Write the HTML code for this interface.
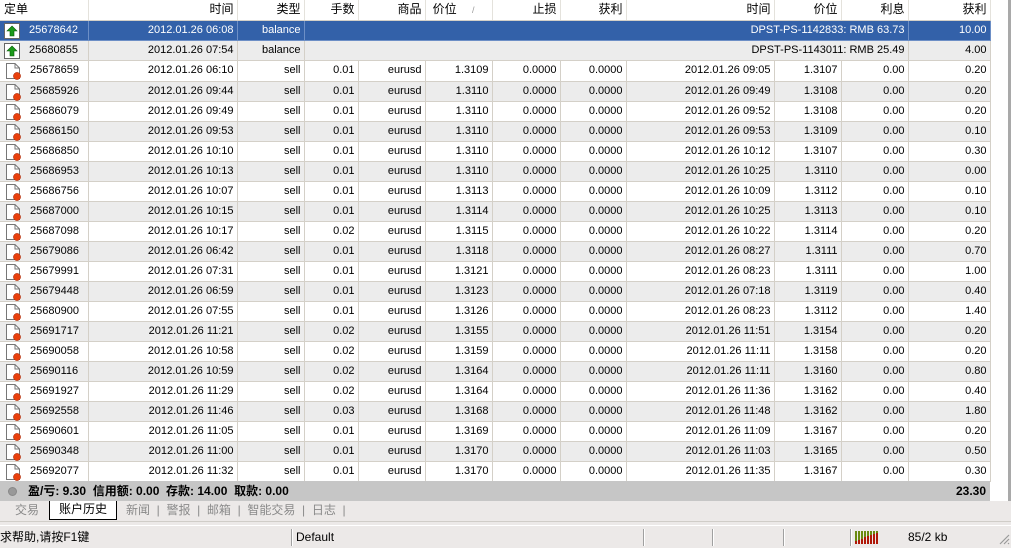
<!DOCTYPE html>
<html><head><meta charset="utf-8"><style>
*{margin:0;padding:0;box-sizing:border-box}
body{width:1011px;height:546px;overflow:hidden;background:#ece9e8;font-family:"Liberation Sans","Noto Sans CJK SC",sans-serif;font-size:11px;color:#000;position:relative}
#grid{position:absolute;left:0;top:0;width:1011px;height:501px;background:#fff;border-right:3px solid #a9a9a9;overflow:hidden}
table{position:absolute;left:0;top:0;width:990px;table-layout:fixed;border-collapse:collapse}
tr{height:20px}
td,th{height:20px;line-height:19px;border-right:1px solid #d4d0c8;border-bottom:1px solid #d4d0c8;text-align:right;padding:0 3px 0 0;white-space:nowrap;overflow:hidden;font-weight:normal;font-size:11px;vertical-align:top}
th{background:#fff;border-right:1px solid #e4e2dc;font-size:12px}
tr.g td{background:#ececec}
tr.sel td{background:#3361a9;color:#fff;border-color:#6d8fc6}
td.f,th.f{text-align:left;padding-left:0}
td.f span{display:inline-block;vertical-align:top;height:19px;line-height:19px}
.ic{display:block;width:18px;height:18px;margin:1px 8px 0 4px}
#sum{position:absolute;left:0;top:481px;width:990px;height:20px;background:#c6c6c6;font-weight:bold;font-size:12px;line-height:20px}
#tabs{position:absolute;left:0;top:501px;width:1011px;height:21px;background:#ece9e8;color:#8a8a8a;font-size:12px;line-height:19px;border-bottom:1px solid #d0cdc8}
#tabs span{position:absolute;top:0}
#status{position:absolute;left:0;top:525px;width:1011px;height:21px;border-top:1px solid #fff;font-size:12px;line-height:22px}
.sep{position:absolute;top:3px;width:2px;height:17px;border-left:1px solid #a0a0a0;border-right:1px solid #fff}
</style></head><body>
<div id="grid">
<table>
<colgroup><col style="width:88px"><col style="width:149px"><col style="width:67px"><col style="width:54px"><col style="width:67px"><col style="width:67px"><col style="width:68px"><col style="width:66px"><col style="width:148px"><col style="width:67px"><col style="width:67px"><col style="width:82px"></colgroup>
<tr><th class="f" style="padding-left:4px">定单</th><th>时间</th><th>类型</th><th>手数</th><th>商品</th><th>价位 <span style="color:#999;font-size:9px;padding:0 14px 0 12px">/</span></th><th>止损</th><th>获利</th><th>时间</th><th>价位</th><th>利息</th><th>获利</th></tr>
<tr class="sel"><td class="f"><span><svg class="ic" viewBox="0 0 18 18" style="margin-left:3px"><rect x="1.5" y="1.5" width="15" height="15" fill="#fff" stroke="#666"/><path d="M9 4 L14 9 H11 V14 H7 V9 H4 Z" fill="#1a9a1a" stroke="#0a5a0a" stroke-width=".6"/></svg></span><span>25678642</span></td><td>2012.01.26 06:08</td><td>balance</td><td colspan="8">DPST-PS-1142833: RMB 63.73</td><td>10.00</td></tr>
<tr class="g"><td class="f"><span><svg class="ic" viewBox="0 0 18 18" style="margin-left:3px"><rect x="1.5" y="1.5" width="15" height="15" fill="#fff" stroke="#666"/><path d="M9 4 L14 9 H11 V14 H7 V9 H4 Z" fill="#1a9a1a" stroke="#0a5a0a" stroke-width=".6"/></svg></span><span>25680855</span></td><td>2012.01.26 07:54</td><td>balance</td><td colspan="8">DPST-PS-1143011: RMB 25.49</td><td>4.00</td></tr>
</table>
<table id="t2" style="top:61px">
<colgroup><col style="width:88px"><col style="width:149px"><col style="width:67px"><col style="width:54px"><col style="width:67px"><col style="width:67px"><col style="width:68px"><col style="width:66px"><col style="width:148px"><col style="width:67px"><col style="width:67px"><col style="width:82px"></colgroup>
<tbody id="rows">
<tr><td class="f"><span><svg class="ic" viewBox="0 0 18 18"><path d="M2.5 1.5H11L15.5 6V16.5H2.5Z" fill="#fff" stroke="#777"/><path d="M11 1.5V6H15.5" fill="none" stroke="#777"/><circle cx="13" cy="14" r="3.6" fill="#e8400c" stroke="#a02000" stroke-width=".5"/></svg></span><span>25678659</span></td><td>2012.01.26 06:10</td><td>sell</td><td>0.01</td><td>eurusd</td><td>1.3109</td><td>0.0000</td><td>0.0000</td><td>2012.01.26 09:05</td><td>1.3107</td><td>0.00</td><td>0.20</td></tr>
<tr class="g"><td class="f"><span><svg class="ic" viewBox="0 0 18 18"><path d="M2.5 1.5H11L15.5 6V16.5H2.5Z" fill="#fff" stroke="#777"/><path d="M11 1.5V6H15.5" fill="none" stroke="#777"/><circle cx="13" cy="14" r="3.6" fill="#e8400c" stroke="#a02000" stroke-width=".5"/></svg></span><span>25685926</span></td><td>2012.01.26 09:44</td><td>sell</td><td>0.01</td><td>eurusd</td><td>1.3110</td><td>0.0000</td><td>0.0000</td><td>2012.01.26 09:49</td><td>1.3108</td><td>0.00</td><td>0.20</td></tr>
<tr><td class="f"><span><svg class="ic" viewBox="0 0 18 18"><path d="M2.5 1.5H11L15.5 6V16.5H2.5Z" fill="#fff" stroke="#777"/><path d="M11 1.5V6H15.5" fill="none" stroke="#777"/><circle cx="13" cy="14" r="3.6" fill="#e8400c" stroke="#a02000" stroke-width=".5"/></svg></span><span>25686079</span></td><td>2012.01.26 09:49</td><td>sell</td><td>0.01</td><td>eurusd</td><td>1.3110</td><td>0.0000</td><td>0.0000</td><td>2012.01.26 09:52</td><td>1.3108</td><td>0.00</td><td>0.20</td></tr>
<tr class="g"><td class="f"><span><svg class="ic" viewBox="0 0 18 18"><path d="M2.5 1.5H11L15.5 6V16.5H2.5Z" fill="#fff" stroke="#777"/><path d="M11 1.5V6H15.5" fill="none" stroke="#777"/><circle cx="13" cy="14" r="3.6" fill="#e8400c" stroke="#a02000" stroke-width=".5"/></svg></span><span>25686150</span></td><td>2012.01.26 09:53</td><td>sell</td><td>0.01</td><td>eurusd</td><td>1.3110</td><td>0.0000</td><td>0.0000</td><td>2012.01.26 09:53</td><td>1.3109</td><td>0.00</td><td>0.10</td></tr>
<tr><td class="f"><span><svg class="ic" viewBox="0 0 18 18"><path d="M2.5 1.5H11L15.5 6V16.5H2.5Z" fill="#fff" stroke="#777"/><path d="M11 1.5V6H15.5" fill="none" stroke="#777"/><circle cx="13" cy="14" r="3.6" fill="#e8400c" stroke="#a02000" stroke-width=".5"/></svg></span><span>25686850</span></td><td>2012.01.26 10:10</td><td>sell</td><td>0.01</td><td>eurusd</td><td>1.3110</td><td>0.0000</td><td>0.0000</td><td>2012.01.26 10:12</td><td>1.3107</td><td>0.00</td><td>0.30</td></tr>
<tr class="g"><td class="f"><span><svg class="ic" viewBox="0 0 18 18"><path d="M2.5 1.5H11L15.5 6V16.5H2.5Z" fill="#fff" stroke="#777"/><path d="M11 1.5V6H15.5" fill="none" stroke="#777"/><circle cx="13" cy="14" r="3.6" fill="#e8400c" stroke="#a02000" stroke-width=".5"/></svg></span><span>25686953</span></td><td>2012.01.26 10:13</td><td>sell</td><td>0.01</td><td>eurusd</td><td>1.3110</td><td>0.0000</td><td>0.0000</td><td>2012.01.26 10:25</td><td>1.3110</td><td>0.00</td><td>0.00</td></tr>
<tr><td class="f"><span><svg class="ic" viewBox="0 0 18 18"><path d="M2.5 1.5H11L15.5 6V16.5H2.5Z" fill="#fff" stroke="#777"/><path d="M11 1.5V6H15.5" fill="none" stroke="#777"/><circle cx="13" cy="14" r="3.6" fill="#e8400c" stroke="#a02000" stroke-width=".5"/></svg></span><span>25686756</span></td><td>2012.01.26 10:07</td><td>sell</td><td>0.01</td><td>eurusd</td><td>1.3113</td><td>0.0000</td><td>0.0000</td><td>2012.01.26 10:09</td><td>1.3112</td><td>0.00</td><td>0.10</td></tr>
<tr class="g"><td class="f"><span><svg class="ic" viewBox="0 0 18 18"><path d="M2.5 1.5H11L15.5 6V16.5H2.5Z" fill="#fff" stroke="#777"/><path d="M11 1.5V6H15.5" fill="none" stroke="#777"/><circle cx="13" cy="14" r="3.6" fill="#e8400c" stroke="#a02000" stroke-width=".5"/></svg></span><span>25687000</span></td><td>2012.01.26 10:15</td><td>sell</td><td>0.01</td><td>eurusd</td><td>1.3114</td><td>0.0000</td><td>0.0000</td><td>2012.01.26 10:25</td><td>1.3113</td><td>0.00</td><td>0.10</td></tr>
<tr><td class="f"><span><svg class="ic" viewBox="0 0 18 18"><path d="M2.5 1.5H11L15.5 6V16.5H2.5Z" fill="#fff" stroke="#777"/><path d="M11 1.5V6H15.5" fill="none" stroke="#777"/><circle cx="13" cy="14" r="3.6" fill="#e8400c" stroke="#a02000" stroke-width=".5"/></svg></span><span>25687098</span></td><td>2012.01.26 10:17</td><td>sell</td><td>0.02</td><td>eurusd</td><td>1.3115</td><td>0.0000</td><td>0.0000</td><td>2012.01.26 10:22</td><td>1.3114</td><td>0.00</td><td>0.20</td></tr>
<tr class="g"><td class="f"><span><svg class="ic" viewBox="0 0 18 18"><path d="M2.5 1.5H11L15.5 6V16.5H2.5Z" fill="#fff" stroke="#777"/><path d="M11 1.5V6H15.5" fill="none" stroke="#777"/><circle cx="13" cy="14" r="3.6" fill="#e8400c" stroke="#a02000" stroke-width=".5"/></svg></span><span>25679086</span></td><td>2012.01.26 06:42</td><td>sell</td><td>0.01</td><td>eurusd</td><td>1.3118</td><td>0.0000</td><td>0.0000</td><td>2012.01.26 08:27</td><td>1.3111</td><td>0.00</td><td>0.70</td></tr>
<tr><td class="f"><span><svg class="ic" viewBox="0 0 18 18"><path d="M2.5 1.5H11L15.5 6V16.5H2.5Z" fill="#fff" stroke="#777"/><path d="M11 1.5V6H15.5" fill="none" stroke="#777"/><circle cx="13" cy="14" r="3.6" fill="#e8400c" stroke="#a02000" stroke-width=".5"/></svg></span><span>25679991</span></td><td>2012.01.26 07:31</td><td>sell</td><td>0.01</td><td>eurusd</td><td>1.3121</td><td>0.0000</td><td>0.0000</td><td>2012.01.26 08:23</td><td>1.3111</td><td>0.00</td><td>1.00</td></tr>
<tr class="g"><td class="f"><span><svg class="ic" viewBox="0 0 18 18"><path d="M2.5 1.5H11L15.5 6V16.5H2.5Z" fill="#fff" stroke="#777"/><path d="M11 1.5V6H15.5" fill="none" stroke="#777"/><circle cx="13" cy="14" r="3.6" fill="#e8400c" stroke="#a02000" stroke-width=".5"/></svg></span><span>25679448</span></td><td>2012.01.26 06:59</td><td>sell</td><td>0.01</td><td>eurusd</td><td>1.3123</td><td>0.0000</td><td>0.0000</td><td>2012.01.26 07:18</td><td>1.3119</td><td>0.00</td><td>0.40</td></tr>
<tr><td class="f"><span><svg class="ic" viewBox="0 0 18 18"><path d="M2.5 1.5H11L15.5 6V16.5H2.5Z" fill="#fff" stroke="#777"/><path d="M11 1.5V6H15.5" fill="none" stroke="#777"/><circle cx="13" cy="14" r="3.6" fill="#e8400c" stroke="#a02000" stroke-width=".5"/></svg></span><span>25680900</span></td><td>2012.01.26 07:55</td><td>sell</td><td>0.01</td><td>eurusd</td><td>1.3126</td><td>0.0000</td><td>0.0000</td><td>2012.01.26 08:23</td><td>1.3112</td><td>0.00</td><td>1.40</td></tr>
<tr class="g"><td class="f"><span><svg class="ic" viewBox="0 0 18 18"><path d="M2.5 1.5H11L15.5 6V16.5H2.5Z" fill="#fff" stroke="#777"/><path d="M11 1.5V6H15.5" fill="none" stroke="#777"/><circle cx="13" cy="14" r="3.6" fill="#e8400c" stroke="#a02000" stroke-width=".5"/></svg></span><span>25691717</span></td><td>2012.01.26 11:21</td><td>sell</td><td>0.02</td><td>eurusd</td><td>1.3155</td><td>0.0000</td><td>0.0000</td><td>2012.01.26 11:51</td><td>1.3154</td><td>0.00</td><td>0.20</td></tr>
<tr><td class="f"><span><svg class="ic" viewBox="0 0 18 18"><path d="M2.5 1.5H11L15.5 6V16.5H2.5Z" fill="#fff" stroke="#777"/><path d="M11 1.5V6H15.5" fill="none" stroke="#777"/><circle cx="13" cy="14" r="3.6" fill="#e8400c" stroke="#a02000" stroke-width=".5"/></svg></span><span>25690058</span></td><td>2012.01.26 10:58</td><td>sell</td><td>0.02</td><td>eurusd</td><td>1.3159</td><td>0.0000</td><td>0.0000</td><td>2012.01.26 11:11</td><td>1.3158</td><td>0.00</td><td>0.20</td></tr>
<tr class="g"><td class="f"><span><svg class="ic" viewBox="0 0 18 18"><path d="M2.5 1.5H11L15.5 6V16.5H2.5Z" fill="#fff" stroke="#777"/><path d="M11 1.5V6H15.5" fill="none" stroke="#777"/><circle cx="13" cy="14" r="3.6" fill="#e8400c" stroke="#a02000" stroke-width=".5"/></svg></span><span>25690116</span></td><td>2012.01.26 10:59</td><td>sell</td><td>0.02</td><td>eurusd</td><td>1.3164</td><td>0.0000</td><td>0.0000</td><td>2012.01.26 11:11</td><td>1.3160</td><td>0.00</td><td>0.80</td></tr>
<tr><td class="f"><span><svg class="ic" viewBox="0 0 18 18"><path d="M2.5 1.5H11L15.5 6V16.5H2.5Z" fill="#fff" stroke="#777"/><path d="M11 1.5V6H15.5" fill="none" stroke="#777"/><circle cx="13" cy="14" r="3.6" fill="#e8400c" stroke="#a02000" stroke-width=".5"/></svg></span><span>25691927</span></td><td>2012.01.26 11:29</td><td>sell</td><td>0.02</td><td>eurusd</td><td>1.3164</td><td>0.0000</td><td>0.0000</td><td>2012.01.26 11:36</td><td>1.3162</td><td>0.00</td><td>0.40</td></tr>
<tr class="g"><td class="f"><span><svg class="ic" viewBox="0 0 18 18"><path d="M2.5 1.5H11L15.5 6V16.5H2.5Z" fill="#fff" stroke="#777"/><path d="M11 1.5V6H15.5" fill="none" stroke="#777"/><circle cx="13" cy="14" r="3.6" fill="#e8400c" stroke="#a02000" stroke-width=".5"/></svg></span><span>25692558</span></td><td>2012.01.26 11:46</td><td>sell</td><td>0.03</td><td>eurusd</td><td>1.3168</td><td>0.0000</td><td>0.0000</td><td>2012.01.26 11:48</td><td>1.3162</td><td>0.00</td><td>1.80</td></tr>
<tr><td class="f"><span><svg class="ic" viewBox="0 0 18 18"><path d="M2.5 1.5H11L15.5 6V16.5H2.5Z" fill="#fff" stroke="#777"/><path d="M11 1.5V6H15.5" fill="none" stroke="#777"/><circle cx="13" cy="14" r="3.6" fill="#e8400c" stroke="#a02000" stroke-width=".5"/></svg></span><span>25690601</span></td><td>2012.01.26 11:05</td><td>sell</td><td>0.01</td><td>eurusd</td><td>1.3169</td><td>0.0000</td><td>0.0000</td><td>2012.01.26 11:09</td><td>1.3167</td><td>0.00</td><td>0.20</td></tr>
<tr class="g"><td class="f"><span><svg class="ic" viewBox="0 0 18 18"><path d="M2.5 1.5H11L15.5 6V16.5H2.5Z" fill="#fff" stroke="#777"/><path d="M11 1.5V6H15.5" fill="none" stroke="#777"/><circle cx="13" cy="14" r="3.6" fill="#e8400c" stroke="#a02000" stroke-width=".5"/></svg></span><span>25690348</span></td><td>2012.01.26 11:00</td><td>sell</td><td>0.01</td><td>eurusd</td><td>1.3170</td><td>0.0000</td><td>0.0000</td><td>2012.01.26 11:03</td><td>1.3165</td><td>0.00</td><td>0.50</td></tr>
<tr><td class="f"><span><svg class="ic" viewBox="0 0 18 18"><path d="M2.5 1.5H11L15.5 6V16.5H2.5Z" fill="#fff" stroke="#777"/><path d="M11 1.5V6H15.5" fill="none" stroke="#777"/><circle cx="13" cy="14" r="3.6" fill="#e8400c" stroke="#a02000" stroke-width=".5"/></svg></span><span>25692077</span></td><td>2012.01.26 11:32</td><td>sell</td><td>0.01</td><td>eurusd</td><td>1.3170</td><td>0.0000</td><td>0.0000</td><td>2012.01.26 11:35</td><td>1.3167</td><td>0.00</td><td>0.30</td></tr>
</tbody></table>
<div id="sum"><span style="position:absolute;left:8px;top:6px;width:9px;height:9px;border-radius:50%;background:#999;border:1px solid #888"></span><span style="position:absolute;left:28px">盈/亏: 9.30&nbsp; 信用额: 0.00&nbsp; 存款: 14.00&nbsp; 取款: 0.00</span><span style="position:absolute;right:4px">23.30</span></div>
</div>
<div id="tabs">
<span style="left:15px">交易</span>
<span style="left:49px;top:0;height:19px;width:68px;background:#fff;border:1px solid #000;border-top:none;color:#000;text-align:center;line-height:17px">账户历史</span>
<span style="left:126px">新闻&nbsp; |&nbsp; 警报&nbsp; |&nbsp; 邮箱&nbsp; |&nbsp; 智能交易&nbsp; |&nbsp; 日志&nbsp; |</span>
</div>
<div id="status">
<span style="position:absolute;left:0">求帮助,请按F1键</span>
<div class="sep" style="left:291px"></div>
<span style="position:absolute;left:296px">Default</span>
<div class="sep" style="left:643px"></div>
<div class="sep" style="left:712px"></div>
<div class="sep" style="left:783px"></div>
<div class="sep" style="left:850px"></div>
<svg style="position:absolute;left:855px;top:5px" width="24" height="13" viewBox="0 0 24 13"><g fill="#6a8a10"><rect x="0" y="0" width="2" height="13"/><rect x="3" y="0" width="2" height="13"/><rect x="6" y="0" width="2" height="13"/><rect x="9" y="0" width="2" height="13"/><rect x="12" y="0" width="2" height="13"/><rect x="15" y="0" width="2" height="13"/><rect x="18" y="0" width="2" height="13"/><rect x="21" y="0" width="2" height="13"/></g><g fill="#b01808"><rect x="0" y="10" width="2" height="3"/><rect x="3" y="9" width="2" height="4"/><rect x="6" y="8" width="2" height="5"/><rect x="9" y="6" width="2" height="7"/><rect x="12" y="5" width="2" height="8"/><rect x="15" y="4" width="2" height="9"/><rect x="18" y="3" width="2" height="10"/><rect x="21" y="2" width="2" height="11"/></g></svg>
<span style="position:absolute;left:908px">85/2 kb</span>
<svg style="position:absolute;right:1px;bottom:1px" width="12" height="12"><path d="M11 2L2 11M11 6L6 11M11 10L10 11" stroke="#999" stroke-width="1.2"/></svg>
</div>
</body></html>
